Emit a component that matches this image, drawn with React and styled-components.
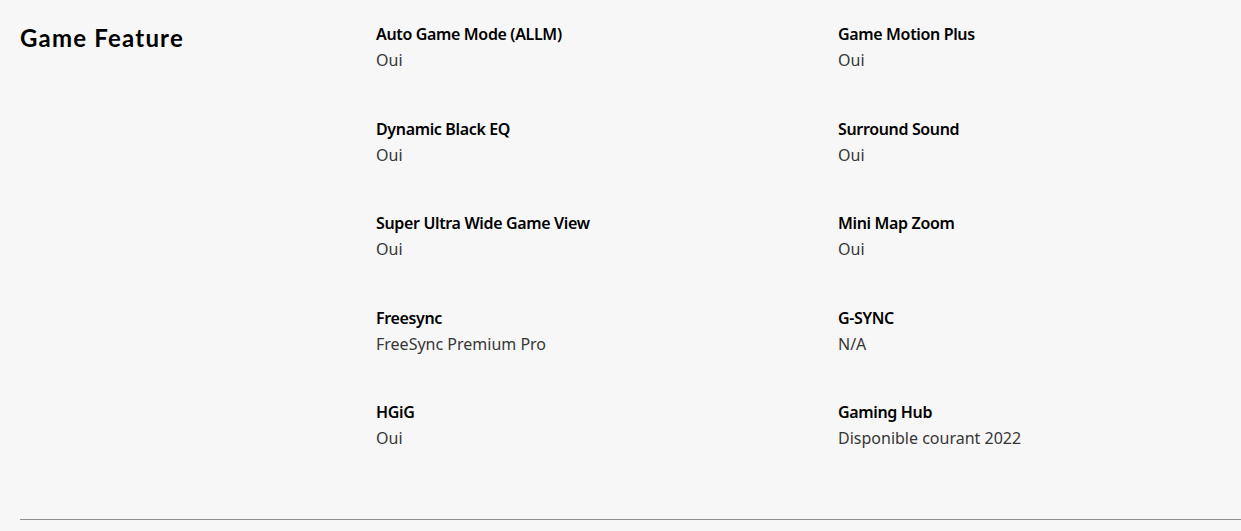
import React from "react";
import styled, { createGlobalStyle } from "styled-components";

const GlobalStyle = createGlobalStyle`
  html, body {
    margin: 0;
    padding: 0;
    background-color: #f7f7f7;
  }
`;

const Page = styled.div`
  padding: 0 0 0 20px;
  background-color: #f7f7f7;
  min-height: 531px;
  box-sizing: border-box;
`;

const Section = styled.section`
  display: grid;
  grid-template-columns: 356px 1fr;
  padding: 22px 0 69px;
  border-bottom: 1px solid #8f8f8f;
`;

const Heading = styled.h2`
  margin: 0;
  padding-top: 1px;
  font-family: "Lato", "Noto Sans", sans-serif;
  font-weight: 700;
  font-size: 24px;
  letter-spacing: 1.2px;
  line-height: 30px;
  color: #000;
`;

const SpecGrid = styled.div`
  display: grid;
  grid-template-columns: 462px 1fr;
  row-gap: 44.5px;
`;

const Spec = styled.div`
  display: flex;
  flex-direction: column;
  gap: 2px;
`;

const SpecTitle = styled.div`
  font-family: "Noto Sans", sans-serif;
  font-weight: 600;
  font-size: 16px;
  letter-spacing: -0.35px;
  line-height: 24px;
  color: #000;
`;

const SpecValue = styled.div`
  font-family: "Noto Sans", sans-serif;
  font-weight: 400;
  font-size: 16px;
  line-height: 24px;
  color: #363636;
`;

const specs = [
  ["Auto Game Mode (ALLM)", "Oui"],
  ["Game Motion Plus", "Oui"],
  ["Dynamic Black EQ", "Oui"],
  ["Surround Sound", "Oui"],
  ["Super Ultra Wide Game View", "Oui"],
  ["Mini Map Zoom", "Oui"],
  ["Freesync", "FreeSync Premium Pro"],
  ["G-SYNC", "N/A"],
  ["HGiG", "Oui"],
  ["Gaming Hub", "Disponible courant 2022"],
];

export default function App() {
  return (
    <Page>
      <GlobalStyle />
      <Section>
        <Heading>Game Feature</Heading>
        <SpecGrid>
          {specs.map(([title, value]) => (
            <Spec key={title}>
              <SpecTitle>{title}</SpecTitle>
              <SpecValue>{value}</SpecValue>
            </Spec>
          ))}
        </SpecGrid>
      </Section>
    </Page>
  );
}
